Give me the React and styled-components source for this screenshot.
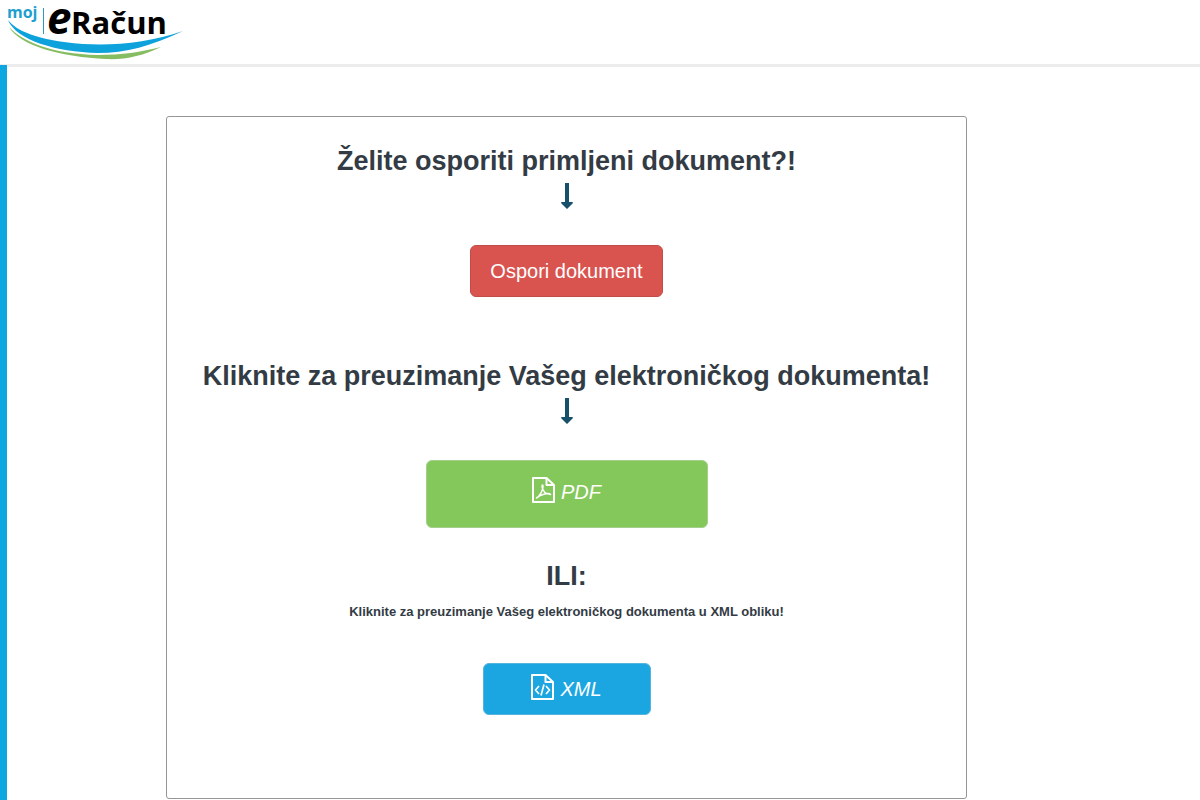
import React from 'react'
import styled, { createGlobalStyle } from 'styled-components'

const GlobalStyle = createGlobalStyle`
    * {
        box-sizing: border-box;
    }
    body {
        margin: 0;
        background-color: #fff;
        color: #333b44;
        font-family: "Liberation Sans", Arial, sans-serif;
    }
`

const Page = styled.div`
    min-height: 100vh;
    display: flex;
    flex-direction: column;
`

const Header = styled.header`
    height: 67px;
    padding: 3px 6px;
    border-bottom: 3px solid #ececec;
`

const LogoLink = styled.a`
    display: inline-block;
`

const LogoImage = styled.svg`
    display: block;
    width: 180px;
    height: 60px;
    overflow: visible;
    font-family: "Open Sans", "Noto Sans", sans-serif;
    font-weight: bold;
`

const Body = styled.div`
    flex: 1;
    display: flex;
    margin-top: -2px;
`

const SideBar = styled.div`
    width: 7px;
    background-color: #0da6e0;
`

const Content = styled.main`
    flex: 1;
    display: grid;
    grid-template-columns: 159fr 801fr 233fr;
    padding: 51px 0 1px;
`

const Card = styled.section`
    grid-column: 2;
    display: flex;
    flex-direction: column;
    align-items: center;
    padding: 28px 16px 83px;
    border: 1px solid #969696;
    border-radius: 3px;
    text-align: center;
`

const Title = styled.h2`
    margin: 0;
    font-size: 27px;
    line-height: 32px;
    font-weight: bold;
`

const Subtitle = styled.h5`
    margin: 12px 0 43px;
    font-size: 13px;
    line-height: 16px;
    font-weight: bold;
`

const ArrowIcon = styled.svg`
    display: block;
    width: 12px;
    height: 26px;
    margin: 6px 0 36px;
    fill: #17506a;
`

const Button = styled.button`
    display: flex;
    align-items: center;
    justify-content: center;
    gap: 6px;
    width: ${props => props.$width};
    height: ${props => props.$height};
    margin: 0 0 ${props => props.$gap};
    padding: 0 0 ${props => props.$lift || '0'};
    border: 1px solid ${props => props.$border};
    border-radius: 6px;
    background-color: ${props => props.$color};
    color: #fff;
    font-family: inherit;
    font-size: 20px;
    line-height: 26px;
    font-style: ${props => (props.$italic ? 'italic' : 'normal')};
    cursor: pointer;
`

const FileIcon = styled.svg`
    width: 23px;
    height: 26px;
    margin-bottom: 4px;
    fill: none;
    stroke: #fff;
    stroke-width: 2;
    stroke-linejoin: round;
`

const Logo = () => (
    <LogoImage viewBox="0 0 180 60" role="img" aria-label="moj eRačun">
        <text x="1" y="15" fill="#1d9fd0" fontSize="16">moj</text>
        <path d="M37.500 5V31" stroke="#2b9bb8" strokeWidth="1" />
        <text x="41" y="31" fill="#000" fontSize="44" fontStyle="italic">e</text>
        <text x="65" y="31" fill="#000" fontSize="31">Račun</text>
        {/* swooshes */}
        <path d="M2 17C10 27 28 37 77 41C110 43 145 39 177 28C145 43 120 50 92 50C50 49 10 37 2 17Z" fill="#0da2dc" />
        <path d="M3 24C16 38 45 51 92 52C116 52 135 49 155 44C137 53 118 57 100 56C56 54 14 43 3 24Z" fill="#86bd62" />
    </LogoImage>
)

const Arrow = () => (
    <ArrowIcon viewBox="0 0 12 26" aria-hidden="true">
        <path d="M4 0H8V19H11.500L12 20L6 26L0 20L0.500 19H4Z" />
    </ArrowIcon>
)

const FileOutline = ({ children }) => (
    <FileIcon viewBox="0 0 23 26" aria-hidden="true">
        <path d="M1 1H14.500L22 8V25H1Z" />
        <path d="M14.500 1V8H22" />
        {children}
    </FileIcon>
)

const App = () => {
    return (
        <Page>
            <GlobalStyle />
            <Header>
                <LogoLink href="#">
                    <Logo />
                </LogoLink>
            </Header>
            <Body>
                <SideBar />
                <Content>
                    <Card>
                        <Title>Želite osporiti primljeni dokument?!</Title>
                        <Arrow />
                        <Button $width="193px" $height="52px" $gap="63px" $color="#d9534f" $border="#c24c48">
                            Ospori dokument
                        </Button>

                        <Title>Kliknite za preuzimanje Vašeg elektroničkog dokumenta!</Title>
                        <Arrow />
                        <Button $width="282px" $height="68px" $gap="32px" $lift="4px" $color="#84c75b" $border="#a3cf8a" $italic>
                            <FileOutline>
                                <path
                                    d="M4.500 21C8 19 11 13 11 9.500C11 7.500 10 7.500 10 9.500C10.500 13 13 17 18.500 17.500C17 15.500 9 17 4.500 21Z"
                                    strokeWidth="1.500"
                                />
                            </FileOutline>
                            PDF
                        </Button>

                        <Title>ILI:</Title>
                        <Subtitle>Kliknite za preuzimanje Vašeg elektroničkog dokumenta u XML obliku!</Subtitle>
                        <Button $width="168px" $height="52px" $gap="0" $color="#1ba6e1" $border="#55b4dc" $italic>
                            <FileOutline>
                                <path d="M8 12L4.500 16L8 20M15 12L18.500 16L15 20M13 10.500L10 21.500" strokeWidth="1.700" />
                            </FileOutline>
                            XML
                        </Button>
                    </Card>
                </Content>
            </Body>
        </Page>
    )
}

export default App
